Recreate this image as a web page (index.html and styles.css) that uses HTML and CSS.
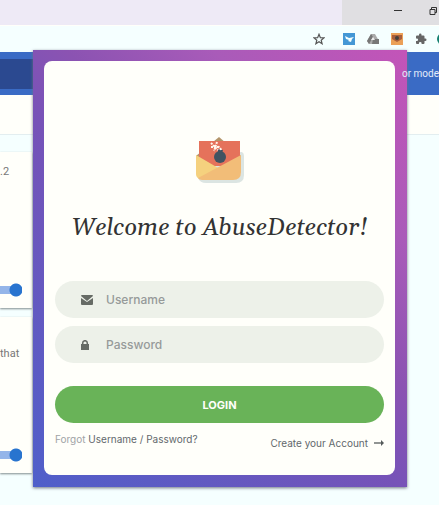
FILE: index.html
```html
<!DOCTYPE html>
<html lang="en">
<head>
<meta charset="utf-8">
<title>AbuseDetector</title>
<link rel="stylesheet" href="styles.css">
</head>
<body>
<header class="titlebar">
  <div class="window-controls">
    <svg width="8" height="8" viewBox="0 0 8 8"><path d="M0 3.5h8" stroke="#333"/></svg>
    <svg width="9" height="8" viewBox="0 0 9 8" fill="none" stroke="#333"><path d="M1 2.500h5v5h-5zM2.500 2V.5h5v5H6"/></svg>
  </div>
</header>
<div class="toolbar">
  <svg width="12" height="12" viewBox="0 0 24 24" fill="none" stroke="#555" stroke-width="2.400"><path d="M12 2.500l2.700 6.700 7.300.5-5.600 4.700 1.800 7.100-6.200-3.900-6.200 3.900 1.800-7.100L2 9.700l7.300-.5z"/></svg>
  <svg class="bird" width="12" height="12" viewBox="0 0 12 12"><path fill="#4497d5" d="M0 0h12v12H0z"/><path fill="#f5ffff" d="M2 3l4 2 5-1-2 2-1 3-3-1 1-1-3-1z"/></svg>
  <svg width="12" height="12" viewBox="0 0 12 12"><path fill="#aaa" d="M4 1h4l4 7-2 3H2L0 8z"/><path fill="#777" d="M4 1l2 3-4 7-2-3zM6 6h6v5H5z"/><path fill="#eee" d="M6 4l2 3H4z"/></svg>
  <svg width="12" height="12" viewBox="0 0 12 12"><path fill="#eba058" d="M0 0h12v12H0z"/><path fill="#a85e3b" d="M1 2h10v4L6 9 1 6z"/><circle cx="6" cy="5" r="2" fill="#44403d"/></svg>
  <svg width="12" height="12" viewBox="0 0 24 24" fill="#666"><path d="M20.500 11H19V7a2 2 0 0 0-2-2h-4V3.500a2.500 2.500 0 0 0-5 0V5H4a2 2 0 0 0-2 2v3.800h1.500a2.700 2.700 0 0 1 0 5.400H2V20a2 2 0 0 0 2 2h3.800v-1.500a2.700 2.700 0 0 1 5.400 0V22H17a2 2 0 0 0 2-2v-4h1.500a2.500 2.500 0 0 0 0-5z"/></svg>
  <span class="avatar"></span>
</div>

<nav class="navbar">
  <div class="search"></div>
  <span class="nav-text">or mode</span>
</nav>
<div class="subbar"></div>
<main class="results">
  <section class="result">
    <p>.2</p>
    <label class="switch"><input type="checkbox" checked aria-label="Enable first extension"></label>
  </section>
  <section class="result">
    <p>that</p>
    <label class="switch"><input type="checkbox" checked aria-label="Enable second extension"></label>
  </section>
</main>

<div class="popup">
  <form class="card">
    <svg class="logo" width="52" height="50" viewBox="0 0 52 50">
      <path fill="#dce5e2" d="M5 20l43-3q2 1 2 4v19q0 8-8 8H12q-6 0-8-5z"/>
      <path fill="#b3956b" d="M25 2l22 19v10H2V21z"/>
      <path fill="#e5725b" d="M5 6h41v25H5z"/>
      <path fill="#f5d17e" d="M2 20l24 14L6 44q-4-1-4-5z"/>
      <path fill="#f2bd78" d="M47 20v17q0 8-8 8H8q-3 0-4-2z"/>
      <circle cx="26" cy="22" r="6" fill="#415362"/>
      <path fill="#415362" d="M24 14l5 1-1 3h-4z"/>
      <path fill="none" stroke="#fff6ec" stroke-width="2" stroke-dasharray="2 1" d="M27 15q-1-4-5-3m-5-4l7 7m-1-8l-3 9m-3-4h7"/>
    </svg>
    <h1>Welcome to AbuseDetector!</h1>
    <div class="field">
      <svg viewBox="0 0 12 10" width="12" height="10"><path fill="#666b65" d="M1 0h10q1 0 1 1L6 6 0 1q0-1 1-1zM0 3l6 4 6-4v6q0 1-1 1H1Q0 10 0 9z"/></svg>
      <input type="text" placeholder="Username" aria-label="Username">
    </div>
    <div class="field">
      <svg viewBox="0 0 12 10" width="12" height="10"><path fill="#666b65" d="M0 4h8v6H0z"/><path fill="none" stroke="#666b65" stroke-width="1.500" d="M1.700 5V3a2.300 2.300 0 0 1 4.600 0v2"/></svg>
      <input type="password" placeholder="Password" aria-label="Password">
    </div>
    <button type="button">LOGIN</button>
    <div class="links">
      <p>Forgot <a href="#recover">Username / Password?</a></p>
      <a class="create" href="#create">Create your Account
        <svg width="10" height="6" viewBox="0 0 10 6"><path d="M0 3h8" stroke="#555b5b" stroke-width="1.300"/><path d="M7 0l3 3-3 3z" fill="#555b5b"/></svg>
      </a>
    </div>
  </form>
</div>
</body>
</html>
```
FILE: styles.css
```css
* { box-sizing: border-box; }
body {
  margin: 0;
  min-height: 100vh;
  overflow: hidden;
  position: relative;
  background: #f5ffff;
  font-family: Inter, "Open Sans", sans-serif;
}
h1, p { margin: 0; }
a { color: #62686c; text-decoration: none; }

.titlebar {
  display: flex;
  justify-content: flex-end;
  height: 25px;
  background: #eeeaf6;
}
.window-controls {
  display: flex;
  align-items: center;
  justify-content: flex-end;
  gap: 27px;
  width: 97px;
  padding: 0 1px 4px 0;
  background: #e0dfe2;
}
.toolbar {
  display: flex;
  align-items: center;
  justify-content: flex-end;
  gap: 12px;
  height: 27px;
  padding-bottom: 1px;
  overflow: hidden;
  border-top: 1px solid #fffffa;
}
.toolbar svg { flex: none; }
.bird { margin-left: 6px; }
.avatar {
  flex: none;
  width: 12px;
  height: 12px;
  margin-left: -2px;
  margin-right: -10px;
  border-radius: 50%;
  background: #148070;
}

.navbar {
  display: flex;
  align-items: center;
  justify-content: space-between;
  height: 43px;
  background: #3a6bc5;
}
.search { width: 50%; height: 30px; background: #2b4990; }
.nav-text {
  position: relative;
  z-index: 2;
  width: 37px;
  overflow: hidden;
  white-space: nowrap;
  color: #e4ebfa;
  font: 10px/16px Roboto, sans-serif;
}
.subbar {
  height: 40px;
  background: #fffffa;
  border-bottom: 1px solid #e3eef0;
}
.results {
  display: grid;
  gap: 9px;
  padding-top: 17px;
}
.result {
  display: flex;
  flex-direction: column;
  justify-content: space-between;
  width: 32px;
  height: 156px;
  padding: 12px 10px 10px 0;
  background: #fffffa;
  box-shadow: 0 1px 2px #7f8b8d;
}
.result:last-child { padding-top: 29px; }
.result p { color: #777; font: 11px/16px Roboto, sans-serif; }
.switch { display: flex; }
.switch input {
  appearance: none;
  width: 22px;
  height: 16px;
  margin: 0;
  background:
    radial-gradient(circle at 16px 8px, #2874cf 6px, transparent 7px),
    linear-gradient(#94b5e9, #94b5e9) 0 4px / 16px 8px no-repeat;
}

.popup {
  position: absolute;
  top: 50px;
  left: 33px;
  right: 32px;
  padding: 11px 12px 12px 11px;
  background: linear-gradient(45deg, #4f5fca, #7653b8 45%, #8b53b2 58%, #a95bb9 76%, #c354b8);
  box-shadow: 0 1px 3px #6f7482;
}
.card {
  display: flex;
  flex-direction: column;
  padding: 74px 11px 24px;
  border-radius: 8px;
  background: #fffffa;
}
.logo { align-self: center; }
h1 {
  margin: 27px 0 37px;
  text-align: center;
  white-space: nowrap;
  color: #333;
  font: italic 24px/32px Gelasio, Georgia, "Liberation Serif", serif;
}
.field {
  display: flex;
  align-items: center;
  gap: 13px;
  height: 37px;
  margin-bottom: 8px;
  padding: 0 26px;
  border-radius: 19px;
  background: #edf1e9;
}
.field input {
  flex: 1;
  min-width: 0;
  padding: 0;
  border: 0;
  outline: 0;
  background: transparent;
  font: 500 12px/18px Inter, sans-serif;
}
.field input::placeholder { color: #969a99; opacity: 1; }
button {
  height: 37px;
  margin-top: 15px;
  padding: 0;
  border: 0;
  border-radius: 19px;
  background: #69b358;
  color: #fffffa;
  font: 700 11px/16px Inter, sans-serif;
}
.links {
  display: flex;
  justify-content: space-between;
  align-items: flex-start;
  margin-top: 8px;
  color: #a0a3a6;
  font-size: 10px;
  line-height: 16px;
  white-space: nowrap;
}
.create { display: flex; align-items: center; gap: 6px; padding-top: 4px; }
```
